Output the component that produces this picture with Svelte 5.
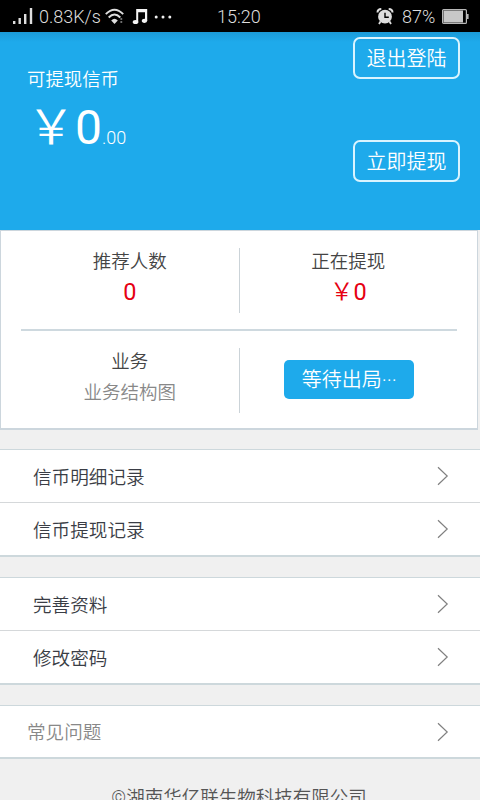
<script lang="ts">
	const groups = [
		{ name: 'records', muted: false, items: ['信币明细记录', '信币提现记录'] },
		{ name: 'profile', muted: false, items: ['完善资料', '修改密码'] },
		{ name: 'help', muted: true, items: ['常见问题'] }
	];
</script>

<div class="screen">
	<div class="status">
		<svg class="signal" width="22" height="18" viewBox="0 0 22 18" fill="#dedede">
			<rect x="1" y="13" width="2.4" height="3" />
			<rect x="6.5" y="10" width="2.4" height="6" />
			<rect x="12" y="6" width="2.4" height="10" />
			<rect x="17.8" y="0" width="2.4" height="16" />
		</svg>
		<span class="speed">0.83K/s</span>
		<svg class="wifi" width="20" height="18" viewBox="0 0 20 18" fill="none" stroke="#dedede" stroke-width="1.9">
			<path d="M0.8 6.2Q9.5 -2.6 18.2 6.2" />
			<path d="M3.7 9.5Q9.5 3.6 15.3 9.5" />
			<path d="M6.2 12.4Q9.5 9.2 12.8 12.4L9.5 16Z" fill="#dedede" stroke="none" />
			<path d="M15.4 11h1.8M15.4 14h1.8" stroke-width="1.2" />
		</svg>
		<svg class="music" width="16" height="17" viewBox="0 0 16 17" fill="#f4f4f4">
			<path d="M4.2 1H15.2V13H13V4.2H6.2V14.5H4.2Z" />
			<ellipse cx="3.5" cy="14" rx="2.8" ry="2.1" />
			<ellipse cx="12.5" cy="12.8" rx="2.7" ry="2.1" />
		</svg>
		<svg class="more" width="18" height="4" viewBox="0 0 18 4" fill="#efefef">
			<circle cx="2.2" cy="2" r="1.5" />
			<circle cx="9" cy="2" r="1.5" />
			<circle cx="15.8" cy="2" r="1.5" />
		</svg>
		<span class="clock">15:20</span>
		<svg class="alarm" width="18" height="17" viewBox="0 0 18 17">
			<path d="M1.5 4.5Q1.5 1 5.3 1M12.7 1Q16.5 1 16.5 4.5" fill="none" stroke="#dedede" stroke-width="2" />
			<path d="M4.5 13.5L3 16M13.5 13.5L15 16" stroke="#dedede" stroke-width="1.8" />
			<circle cx="9" cy="8.7" r="6.9" fill="#dedede" />
			<path d="M9 4.8V9.2H12.8" fill="none" stroke="#000" stroke-width="1.4" />
		</svg>
		<span class="percent">87%</span>
		<svg class="battery" width="27" height="15" viewBox="0 0 27 15">
			<rect x="0.6" y="0.6" width="23.8" height="13.8" rx="1" fill="none" stroke="#b8b8b8" stroke-width="1.2" />
			<rect x="1.5" y="1.5" width="19.5" height="12" fill="#c8c8c8" />
			<rect x="25" y="5" width="1.6" height="5" fill="#b8b8b8" />
		</svg>
	</div>

	<header class="wallet">
		<div class="balance">
			<div class="label">可提现信币</div>
			<div class="amount"><span class="yen">￥</span>0<small>.00</small></div>
		</div>
		<div class="actions">
			<button type="button">退出登陆</button>
			<button type="button">立即提现</button>
		</div>
	</header>

	<section class="card">
		<div class="stats">
			<div class="cell">
				<div class="name">推荐人数</div>
				<div class="value">0</div>
			</div>
			<div class="cell">
				<div class="name">正在提现</div>
				<div class="value"><span class="yen">￥</span>0</div>
			</div>
		</div>
		<div class="stats">
			<div class="cell">
				<div class="name">业务</div>
				<div class="hint">业务结构图</div>
			</div>
			<div class="cell">
				<button type="button" class="wait">等待出局<span>···</span></button>
			</div>
		</div>
	</section>

	{#each groups as group (group.name)}
		<ul class="menu" class:muted={group.muted}>
			{#each group.items as item}
				<li>
					<span>{item}</span>
					<svg width="12" height="20" viewBox="0 0 12 20" fill="none" stroke="#808080" stroke-width="1.2">
						<path d="M1 1.2L10.2 10L1 18.8" />
					</svg>
				</li>
			{/each}
		</ul>
	{/each}

	<footer>©湖南华亿联生物科技有限公司</footer>
</div>

<style>
	:global(body) {
		background: #f0f0f0;
		overflow: hidden;
	}

	.screen {
		height: 800px;
		overflow: hidden;
		background: #f0f0f0;
		color: #444;
		font-family: Roboto, 'Noto Sans CJK SC', sans-serif;
		font-weight: 350;
	}

	.screen * {
		box-sizing: border-box;
	}

	.status {
		display: flex;
		align-items: center;
		height: 32px;
		padding: 1px 11px 0 12px;
		background: #000;
		color: #dedede;
		font-size: 18px;
		font-weight: 300;
		line-height: 32px;
		white-space: nowrap;
	}

	.status svg {
		flex: none;
	}

	.speed {
		width: 61px;
		margin-left: 5px;
	}

	.wifi {
		margin-left: 5px;
	}

	.music {
		margin-left: 7px;
	}

	.more {
		margin-left: 6px;
	}

	.clock {
		margin-left: 45px;
	}

	.alarm {
		margin-left: auto;
	}

	.percent {
		width: 36px;
		margin-left: 8px;
	}

	.battery {
		margin-left: 4px;
	}

	.wallet {
		display: flex;
		justify-content: space-between;
		height: 198px;
		padding: 5px 20px 0 27px;
		background: linear-gradient(#1b9bd8, #1eaaeb 10px);
		color: #fff;
	}

	.label {
		margin-top: 29px;
		font-size: 18.4px;
		line-height: 28px;
	}

	.amount {
		display: flex;
		align-items: baseline;
		font-size: 48px;
		font-weight: 400;
		line-height: 58px;
	}

	.amount small {
		font-size: 18px;
		font-weight: 350;
	}

	.yen {
		font-family: 'Noto Sans CJK SC', sans-serif;
		font-weight: 350;
	}

	.actions {
		display: flex;
		flex-direction: column;
		gap: 61px;
	}

	button {
		padding: 0;
		color: #fff;
		font: inherit;
		font-size: 20px;
	}

	.actions button {
		width: 107px;
		height: 42px;
		padding-bottom: 2px;
		border: 2px solid #d9f4ff;
		border-radius: 7px;
		background: transparent;
	}

	.card {
		width: 478px;
		height: 200px;
		padding: 0 20px;
		border: 1px solid #ccd6dd;
		border-width: 1px 1px 2px;
		background: #fff;
	}

	.stats {
		display: flex;
		align-items: center;
		height: 98px;
	}

	.stats + .stats {
		height: 100px;
		border-top: 2px solid #ced9df;
	}

	.cell {
		display: flex;
		flex: 1;
		flex-direction: column;
		align-items: center;
		height: 65px;
		text-align: center;
	}

	.cell:first-child {
		border-right: 1px solid #cbd3d8;
	}

	.name,
	.hint {
		font-size: 18.5px;
		line-height: 31px;
	}

	.name {
		margin-top: -1px;
	}

	.hint {
		color: #888;
	}

	.stats:first-child .name {
		height: 30px;
	}

	.value {
		display: flex;
		align-items: baseline;
		height: 31px;
		color: #e60012;
		font-size: 23.5px;
		font-weight: 400;
		line-height: 31px;
	}

	.value .yen {
		line-height: 20px;
	}

	.wait {
		width: 130px;
		height: 39px;
		margin: 12px 0 0 2px;
		padding-bottom: 2px;
		border: 0;
		border-radius: 5px;
		background: #1eaaeb;
	}

	.menu {
		margin: 20px 0 0;
		padding: 0;
		border: solid #cdd8dc;
		border-width: 1px 0 2px;
		background: #fff;
		list-style: none;
	}

	.card + .menu {
		margin-top: 19px;
	}

	.menu li {
		display: flex;
		align-items: center;
		justify-content: space-between;
		height: 52px;
		padding: 0 31px 0 33px;
		color: #3a3d45;
		font-size: 18.6px;
	}

	.menu li span {
		padding-bottom: 2px;
	}

	.menu li + li {
		height: 53px;
		border-top: 1px solid #d5d8da;
	}

	.menu.muted li {
		height: 51px;
		padding-left: 27px;
		color: #888;
	}

	footer {
		margin-top: 25px;
		padding-right: 2px;
		color: #555;
		font-size: 18.5px;
		line-height: 28px;
		text-align: center;
	}
</style>
